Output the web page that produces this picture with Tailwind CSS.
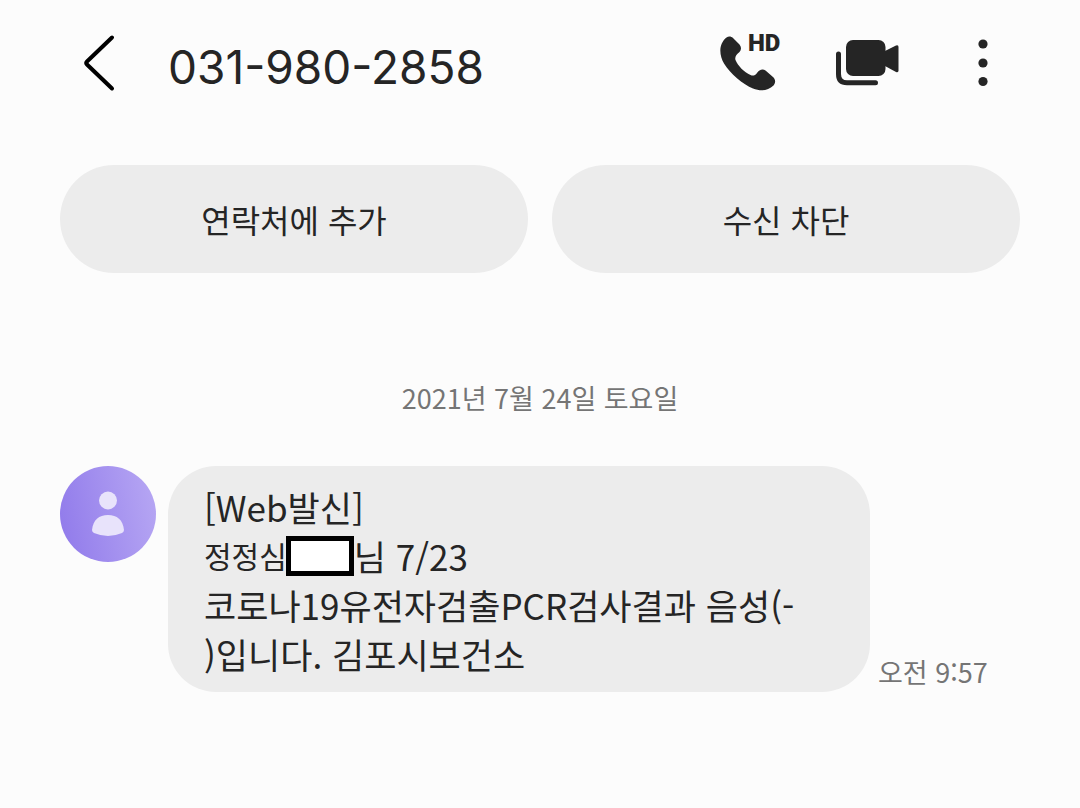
<!DOCTYPE html>
<html lang="ko">
<head>
<meta charset="utf-8">
<meta name="viewport" content="width=device-width, initial-scale=1">
<title>031-980-2858</title>
<script src="https://cdn.jsdelivr.net/npm/@tailwindcss/browser@4"></script>
</head>
<body class="min-h-screen bg-[#fcfcfc] font-['Noto_Sans_CJK_KR',sans-serif] text-[#252525]">
<header class="flex h-[126px] items-center pl-[76px] pr-[60px]">
  <button type="button" aria-label="뒤로" class="shrink-0">
    <svg class="block h-16 w-12" viewBox="0 0 48 64" fill="none" stroke="#000" stroke-width="4" stroke-linecap="round" stroke-linejoin="round"><path d="M36 6.500 11 30.500Q9.500 32 11 33.500L36 57.500"/></svg>
  </button>
  <h1 class="ml-[44px] flex-1 whitespace-nowrap pt-2 font-['Inter',sans-serif] text-[46px] leading-[56px]">031-980-2858</h1>
  <button type="button" aria-label="HD 음성 통화" class="relative h-16 w-16 shrink-0">
    <svg class="block h-16 w-16" viewBox="0 0 64 64" fill="#252525"><path d="M10.500 6.500C12.500 5 15 5 17 7L23.500 13.500C25.500 16 25.500 18.500 23.500 21C20.500 23.500 18.500 26 19.500 29C22 35 28 41 34.500 44C37 45.300 39 44.500 41 42C43 39 46.500 37.500 49.500 39.500L57 46C60 49 59.500 52 57.500 54.500C52 60 44.500 60.500 37 57.500C27 53.500 14 42.500 8 32.500C3 23.500 2.500 13 10.500 6.500Z"/></svg>
    <span class="absolute left-8 top-0 font-['Roboto',sans-serif] text-[24px] font-black leading-6">HD</span>
  </button>
  <button type="button" aria-label="영상 통화" class="ml-[54px] shrink-0">
    <svg class="block h-16 w-[68px]" viewBox="0 0 68 64"><g fill="#252525"><rect x="12" y="9" width="39.500" height="36" rx="7"/><path d="M51 20 62 14.500Q64.500 13.500 64.500 16V39.500Q64.500 42 62 41L51 35Z"/></g><path d="M4.500 23V43Q4.500 51.800 13 51.800H41.500" fill="none" stroke="#252525" stroke-width="5" stroke-linecap="round"/></svg>
  </button>
  <button type="button" aria-label="더보기" class="ml-[50px] shrink-0">
    <svg class="block h-16 w-[68px]" viewBox="0 0 68 64" fill="#252525"><circle cx="31" cy="13" r="4.600"/><circle cx="31" cy="32" r="4.600"/><circle cx="31" cy="50.500" r="4.600"/></svg>
  </button>
</header>
<main class="px-[60px] pt-[39px]">
  <div class="grid grid-cols-2 gap-6 text-[32px]">
    <button type="button" class="h-[108px] rounded-full bg-[#ececec]">연락처에 추가</button>
    <button type="button" class="h-[108px] rounded-full bg-[#ececec]">수신 차단</button>
  </div>
  <p class="mt-[105px] text-center text-[27px] leading-10 text-[#757575]">2021년 7월 24일 토요일</p>
  <div class="mt-12 flex">
    <svg class="h-24 w-24 shrink-0" viewBox="0 0 96 96" role="img" aria-label="프로필">
      <defs><linearGradient id="avatar" x1="0" y1=".6" x2="1" y2=".4"><stop offset="0" stop-color="#927ceb"/><stop offset="1" stop-color="#b5a5f3"/></linearGradient></defs>
      <circle cx="48" cy="48" r="48" fill="url(#avatar)"/>
      <g fill="#e8e3fb"><circle cx="48" cy="34.500" r="9"/><path d="M32 64C33 54 39 49 48 49S63 54 64 64Q64 66 62 67Q48 73 34 67Q32 66 32 64Z"/></g>
    </svg>
    <div class="ml-3 w-[702px] rounded-[48px] bg-[#ececec] pb-[14px] pl-9 pr-6 pt-4 text-[35px] leading-[49px]">
      <p>[Web발신]</p>
      <p class="flex items-center"><span class="text-[30px]">정정심</span><span class="-ml-px h-10 w-[68px] border-[5px] border-black bg-white"></span><span>님 7/23</span></p>
      <p class="whitespace-nowrap">코로나19유전자검출PCR검사결과 음성(-</p>
      <p>)입니다. 김포시보건소</p>
    </div>
    <time class="ml-2 self-end whitespace-nowrap text-[27px] leading-10 text-[#757575]">오전 9:57</time>
  </div>
</main>
</body>
</html>
